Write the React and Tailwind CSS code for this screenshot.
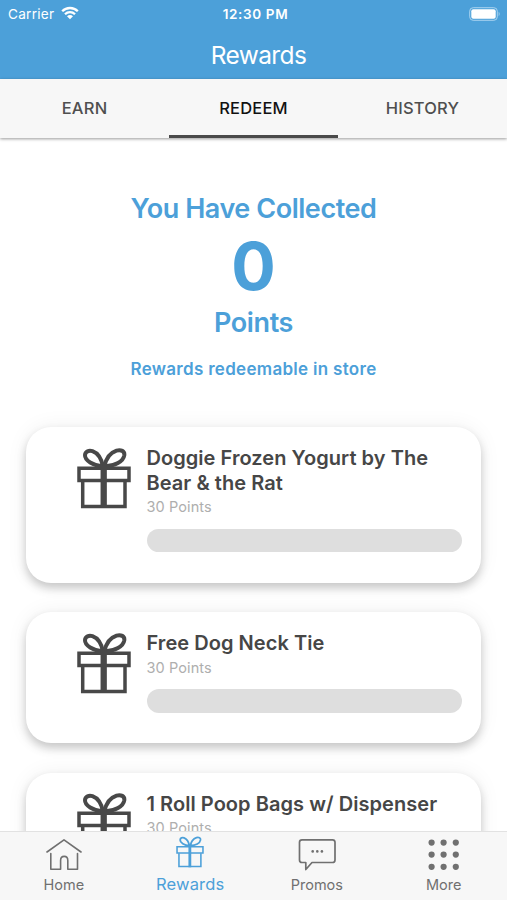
import { useState } from "react";

const TABS = ["EARN", "REDEEM", "HISTORY"];

const REWARDS = [
  { id: 1, title: "Doggie Frozen Yogurt by The Bear & the Rat", points: 30 },
  { id: 2, title: "Free Dog Neck Tie", points: 30 },
  { id: 3, title: "1 Roll Poop Bags w/ Dispenser", points: 30 },
];

function GiftIcon({ className, strokeWidth = 4, ribbon = 6.3 }) {
  return (
    <svg viewBox="0 0 54 61" fill="none" stroke="currentColor" strokeWidth={strokeWidth} className={className}>
      <path d="M26 18.500C16 17.500 7.800 12.500 8 7.200C8.200 3.200 12 2.200 15.500 3.200C20.500 5 24.500 11 26 18.500Z" />
      <path d="M27.500 18.500C29 10 34 4.400 39.500 2.600C44 1.400 47.800 3 47.300 7.200C46.300 13.500 38 18 27.500 18.500Z" />
      <path d="M2 20.200H52V32.600H2Z" strokeWidth={strokeWidth - 0.5} />
      <path d="M5.700 33V58.500H48V33" strokeWidth={strokeWidth - 0.5} />
      <path d="M26.700 17.500V60" strokeWidth={ribbon} />
    </svg>
  );
}

function HomeIcon() {
  return (
    <svg width="36" height="34" viewBox="0 0 36 34" fill="none" stroke="currentColor" strokeWidth="1.600" strokeLinecap="round" strokeLinejoin="round">
      <path d="M1 14L18 1.800L35 14" />
      <path d="M4.800 15.500V31.200H14.600V22.500C14.600 17 21.800 17 21.800 22.500V31.200H31.500V15.500" />
    </svg>
  );
}

function PromosIcon() {
  return (
    <svg width="38" height="34" viewBox="0 0 38 34" fill="none" stroke="currentColor" strokeWidth="1.700" strokeLinejoin="round">
      <path d="M4 1.800H34.500Q37 1.800 37 4.300V22Q37 24.500 34.500 24.500H14L7.800 31.500V24.500H4Q1.500 24.500 1.500 22V4.300Q1.500 1.800 4 1.800Z" />
      <g fill="currentColor" stroke="none">
        <circle cx="14.700" cy="13.400" r="1.300" />
        <circle cx="19.300" cy="13.400" r="1.300" />
        <circle cx="23.900" cy="13.400" r="1.300" />
      </g>
    </svg>
  );
}

function MoreIcon() {
  const steps = [3.6, 15.6, 27.8];
  return (
    <svg width="32" height="32" viewBox="0 0 32 32" fill="currentColor">
      {steps.map((y) => steps.map((x) => <circle key={`${x}-${y}`} cx={x} cy={y} r="3.100" />))}
    </svg>
  );
}

function StatusBar() {
  return (
    <div className="grid h-[27px] grid-cols-3 items-center pl-2 pr-1.5 text-[13px]">
      <div className="flex items-center gap-[7px]">
        <span className="pt-0.5 text-[13.6px] tracking-[0.250px]">Carrier</span>
        <svg width="18" height="14" viewBox="0 0 18 14" fill="none" stroke="currentColor" strokeWidth="2.300">
          <path d="M1.200 5.300C5.500 .9 12.500 .9 16.800 5.300" />
          <path d="M4 8.300C6.800 5.500 11.200 5.500 14 8.300" />
          <path d="M9 13.200L6 10.200C7.700 8.600 10.300 8.600 12 10.200Z" fill="currentColor" stroke="none" />
        </svg>
      </div>
      <span className="pt-0.5 pl-0.5 text-center text-[13.5px] font-semibold tracking-[0.650px] whitespace-nowrap">12:30 PM</span>
      <svg width="32" height="14" viewBox="0 0 32 14" className="justify-self-end">
        <rect x=".700" y=".700" width="27.600" height="12.600" rx="3.500" fill="none" stroke="#a9d3ef" strokeWidth="1" />
        <rect x="2.300" y="2.300" width="24.400" height="9.400" rx="2" fill="white" />
        <path d="M29.700 4.800Q31.600 7 29.700 9.200Z" fill="#a9d3ef" />
      </svg>
    </div>
  );
}

function RewardCard({ reward }) {
  return (
    <article className="flex shrink-0 rounded-[25px] bg-white pt-[18px] pr-[19px] pb-[30.500px] pl-[50.500px] shadow-[0_5px_10px_rgba(0,0,0,0.2),0_0_22px_rgba(0,0,0,0.06)]">
      <GiftIcon className="mt-[2.500px] h-[61px] w-[54px] shrink-0 text-[#484848]" />
      <div className="ml-4 flex-1">
        <h3 className="pt-px text-[20px] leading-[24.500px] font-semibold tracking-[0.050px] text-[#464646]">{reward.title}</h3>
        <p className="text-[14.500px] leading-6 tracking-[0.100px] text-[#aeaeae]">{reward.points} Points</p>
        <div className="mt-[9.500px] h-[23.500px] rounded-full bg-[#dedede]" />
      </div>
    </article>
  );
}

export default function App() {
  const [tab, setTab] = useState("REDEEM");

  return (
    <div className="flex h-[900px] w-[507px] flex-col overflow-hidden bg-white font-['Inter','Liberation_Sans',sans-serif]">
      <header className="h-[79px] shrink-0 bg-[#4ca0d9] text-white">
        <StatusBar />
        <h1 className="pl-2.5 text-center text-[24.500px] leading-[56px] tracking-[-0.600px]">Rewards</h1>
      </header>

      <nav className="z-10 grid h-[59px] shrink-0 grid-cols-3 bg-[#f7f7f7] shadow-[0_1px_3px_rgba(0,0,0,0.4)]">
        {TABS.map((t) => (
          <button
            key={t}
            onClick={() => setTab(t)}
            className={`border-b-[3px] pt-[3px] text-[16.500px] font-medium tracking-[0.200px] ${t === tab ? "border-[#4a4a4a] text-[#111]" : "border-transparent text-[#4f4f4f]"}`}
          >
            {t}
          </button>
        ))}
      </nav>

      <main className="flex min-h-0 flex-1 flex-col overflow-hidden px-[26px]">
        <section className="h-[289px] shrink-0 pt-[52px] text-center text-[#4ca0d9]">
          <h2 className="text-[27px] leading-[38px] font-semibold tracking-[-0.450px]">You Have Collected</h2>
          <p className="text-[66px] leading-[76px] font-bold">0</p>
          <p className="text-[27px] leading-[38px] font-semibold tracking-[-0.400px]">Points</p>
          <p className="mt-[15px] text-[17px] leading-6 font-semibold tracking-[0.300px]">Rewards redeemable in store</p>
        </section>
        <div className="flex flex-col gap-[29.500px]">
          {REWARDS.map((r) => (
            <RewardCard key={r.id} reward={r} />
          ))}
        </div>
      </main>

      <footer className="z-10 grid h-[69px] shrink-0 grid-cols-4 border-t border-[#e2e2e2] bg-[#f7f7f7] text-[#707070]">
        <a className="flex flex-col items-center pt-[6px] pl-px">
          <HomeIcon />
          <span className="mt-[3px] text-[14.500px] leading-5">Home</span>
        </a>
        <a className="flex flex-col items-center pt-1 text-[#4ca0d9]">
          <GiftIcon className="h-8 w-7" strokeWidth={3.5} ribbon={5.5} />
          <span className="mt-1.5 text-[16.500px] leading-5 tracking-[0.150px]">Rewards</span>
        </a>
        <a className="flex flex-col items-center pt-[6px]">
          <PromosIcon />
          <span className="mt-[3px] text-[14.500px] leading-5">Promos</span>
        </a>
        <a className="flex flex-col items-center pt-[7px]">
          <MoreIcon />
          <span className="mt-1 text-[14.500px] leading-5">More</span>
        </a>
      </footer>
    </div>
  );
}
